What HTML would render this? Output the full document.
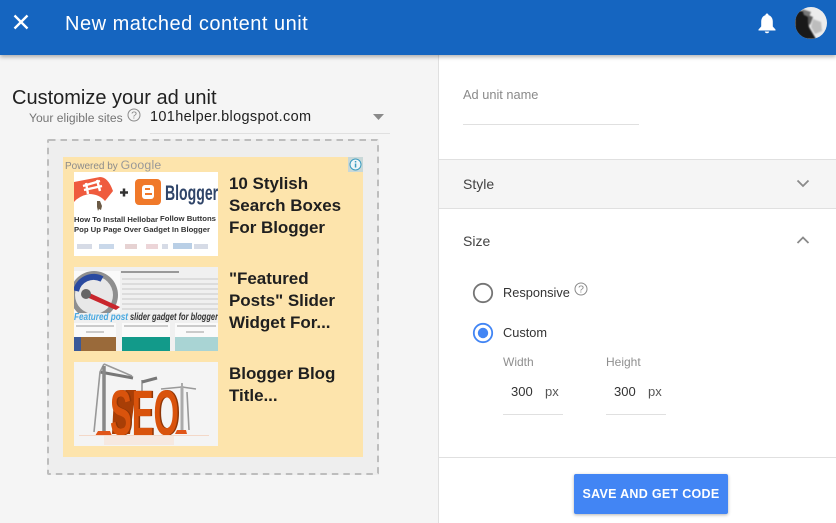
<!DOCTYPE html>
<html><head><meta charset="utf-8"><style>
html,body{margin:0;padding:0}
body{width:836px;height:523px;position:relative;overflow:hidden;background:#fff;font-family:"Liberation Sans",sans-serif;color:#212121}
.a{position:absolute;white-space:nowrap}
.ln{position:absolute;background:#e0e0e0}
.t{position:absolute;left:229px;font-weight:bold;font-size:17px;line-height:22px;letter-spacing:-.03px;color:#1f1f1f;white-space:nowrap}
.g{color:#757575}
.th{filter:blur(.35px)}
</style></head><body>
<div class="a" style="left:0;top:55px;width:438px;height:468px;background:#f5f5f5"></div>
<div class="ln" style="left:438px;top:55px;width:1px;height:468px"></div>
<div class="a" style="left:0;top:0;width:836px;height:55px;background:#1565c0;box-shadow:0 2px 4px rgba(0,0,0,.3)"></div>
<svg class="a" style="left:12px;top:13px" width="18" height="18" viewBox="0 0 18 18"><path d="M2.500 2.500L15.500 15.500M15.500 2.500L2.500 15.500" stroke="#fff" stroke-width="2.300" fill="none"/></svg>
<div class="a" style="left:65px;top:12px;font-size:20px;line-height:24px;color:#fff;letter-spacing:.5px">New matched content unit</div>
<svg class="a" style="left:757px;top:13px" width="20" height="22" viewBox="0 0 20 22"><path d="M10 .5C9 .5 8.500 1.200 8.500 2.100C5.700 2.900 4.200 5.500 4.200 8.500V13.500L1.500 16.500V17.500H18.500V16.500L15.800 13.500V8.500C15.800 5.500 14.300 2.900 11.500 2.100C11.500 1.200 11 .5 10 .5ZM7.800 18.500C7.800 19.600 8.900 20.300 10 20.300S12.200 19.600 12.200 18.500Z" fill="#fff"/></svg>
<svg class="a" style="left:795px;top:7px" width="32" height="32" viewBox="0 0 32 32"><defs><clipPath id="c"><circle cx="16" cy="16" r="16"/></clipPath></defs><g clip-path="url(#c)"><rect width="32" height="32" fill="#ececec"/><g style="filter:blur(.8px)"><path d="M0 4H8L13 10L14 20L21 32H0Z" fill="#191919"/><path d="M7 2L16 5L14 10L9 8Z" fill="#777"/><path d="M18 12L26 15L27 24L20 27L16 20Z" fill="#bdbdbd"/><path d="M13 8L18 10L15 18L13 16Z" fill="#5a5a5a"/></g></g></svg>

<div class="a" style="left:12px;top:86px;font-size:20px;line-height:24px;color:#212121">Customize your ad unit</div>
<div class="a g" style="left:29px;top:110px;font-size:12.100px;line-height:16px">Your eligible sites</div>
<svg class="a" style="left:127px;top:108px" width="14" height="14" viewBox="0 0 14 14"><circle cx="7" cy="7" r="6" fill="none" stroke="#8a8a8a"/><text x="7" y="10.700" font-size="10.500" text-anchor="middle" fill="#8a8a8a" font-family="Liberation Sans">?</text></svg>
<div class="a" style="left:150px;top:108px;font-size:14.500px;line-height:18px;color:#212121;letter-spacing:.34px">101helper.blogspot.com</div>
<svg class="a" style="left:373px;top:114px" width="11" height="6"><path d="M0 0H11L5.500 6Z" fill="#8a8a8a"/></svg>
<div class="ln" style="left:150px;top:133px;width:240px;height:1px"></div>

<div class="a" style="left:47px;top:139px;width:332px;height:336px;background:#eeeeee"></div>
<svg class="a" style="left:47px;top:139px" width="332" height="336"><rect x="1" y="1" width="330" height="334" rx="1" fill="none" stroke="#bdbdbd" stroke-width="2" stroke-dasharray="6.500 5"/></svg>
<div class="a" style="left:63px;top:157px;width:300px;height:300px;background:#fde4ac"></div>
<div class="a" style="left:348px;top:157px;width:15px;height:15px;background:#c8d8d8"></div>
<svg class="a" style="left:349px;top:158px" width="13" height="13" viewBox="0 0 13 13"><circle cx="6.500" cy="6.500" r="5.500" fill="#eef6f8" stroke="#3a9cc0"/><rect x="5.800" y="5.500" width="1.500" height="4" fill="#3a9cc0"/><rect x="5.800" y="3" width="1.500" height="1.500" fill="#3a9cc0"/></svg>
<div class="a" style="left:65px;top:159px;font-size:10px;line-height:12px;color:#8b8b8b">Powered by <span style="font-size:12.300px;letter-spacing:.2px;color:#999">Google</span></div>

<!-- thumb 1 -->
<svg class="a th" style="left:74px;top:172px" width="144" height="84" viewBox="0 0 144 84">
<rect width="144" height="84" fill="#fff"/>
<path d="M0 10L26 5Q34 5 39 19L31 29Q25 22 15 22Q5 24 0 30Z" fill="#ef5b3e"/>
<path d="M9 14L26 9M12 11L14 22M23 8L26 19M10 18L28 14" stroke="#fff" stroke-width="2.400" fill="none"/>
<path d="M23 29h3l2 5-1 4-2-1-1 2-1-4z" fill="#6b5a45"/>
<path d="M46 20.500H54M50 16.500V24.500" stroke="#333" stroke-width="2.500"/>
<rect x="61" y="7" width="26" height="26" rx="4" fill="#f0792a"/>
<rect x="68" y="13" width="12" height="14" rx="3" fill="#fff"/><rect x="71" y="16" width="5" height="2" fill="#f0792a"/><rect x="71" y="21" width="7" height="2" fill="#f0792a"/>
<text transform="translate(91,28) scale(.67,1)" font-family="Liberation Sans" font-weight="bold" font-size="21" fill="#2f4468">Blogger</text>
<text x="0" y="50" font-family="Liberation Sans" font-weight="bold" font-size="7.500" fill="#333" textLength="84" lengthAdjust="spacingAndGlyphs">How To Install Hellobar</text>
<text x="86" y="49" font-family="Liberation Sans" font-weight="bold" font-size="7.500" fill="#333" textLength="56" lengthAdjust="spacingAndGlyphs">Follow Buttons</text>
<text x="0" y="60" font-family="Liberation Sans" font-weight="bold" font-size="7.500" fill="#333" textLength="136" lengthAdjust="spacingAndGlyphs">Pop Up Page Over Gadget In Blogger</text>
<g fill="#d6dbe6"><rect x="3" y="72" width="15" height="5"/><rect x="25" y="72" width="15" height="5" fill="#c9d8ea"/><rect x="51" y="72" width="12" height="5" fill="#e6d2d2"/><rect x="72" y="72" width="12" height="5" fill="#ecd5d8"/><rect x="88" y="72" width="6" height="5"/><rect x="99" y="71" width="19" height="6" fill="#b9cfe6"/><rect x="120" y="72" width="14" height="5"/></g>
</svg>
<div class="t" style="top:173px">10 Stylish<br>Search Boxes<br>For Blogger</div>

<!-- thumb 2 -->
<svg class="a th" style="left:74px;top:267px" width="144" height="84" viewBox="0 0 144 84">
<rect width="144" height="84" fill="#f0f0f0"/>
<rect y="4" width="46" height="42" fill="#fafafa"/>
<clipPath id="g2"><rect y="4" width="46" height="42"/></clipPath>
<g clip-path="url(#g2)">
<circle cx="20" cy="28" r="24" fill="#8f8f8f"/><circle cx="20" cy="28" r="19" fill="#e8e8e8"/>
<path d="M2 24A18 18 0 0 1 28 12" stroke="#2a4aa0" stroke-width="6" fill="none"/>
<path d="M9 23L46 40L42 43L8 28Z" fill="#c9262c"/>
<circle cx="12" cy="27" r="5" fill="#666"/>
</g>
<path d="M47 5H105" stroke="#999" stroke-width="2"/>
<g stroke="#dcdcdc" stroke-width="2"><path d="M48 12H144M48 17H144M48 22H144M48 27H144M48 32H144M48 37H144M48 42H144"/></g>
<text x="0" y="53" font-family="Liberation Sans" font-style="italic" font-weight="bold" font-size="10" fill="#48a8e0" textLength="54" lengthAdjust="spacingAndGlyphs">Featured post</text>
<text x="56" y="53" font-family="Liberation Sans" font-style="italic" font-weight="bold" font-size="10" fill="#333" textLength="88" lengthAdjust="spacingAndGlyphs">slider gadget for blogger</text>
<rect y="56" width="42" height="28" fill="#fafafa"/><rect x="48" y="56" width="48" height="28" fill="#fafafa"/><rect x="101" y="56" width="43" height="28" fill="#fafafa"/>
<path d="M2 59H40M12 65H30M50 59H94M103 59H142M112 65H130" stroke="#bbb" stroke-width="1.500"/>
<rect y="70" width="42" height="14" fill="#9a6a3a"/><rect y="70" width="7" height="14" fill="#3b5998"/>
<rect x="48" y="70" width="48" height="14" fill="#129a8a"/>
<rect x="101" y="70" width="43" height="14" fill="#a9d4d4"/>
</svg>
<div class="t" style="top:268px">"Featured<br>Posts" Slider<br>Widget For...</div>

<!-- thumb 3 -->
<svg class="a th" style="left:74px;top:362px" width="144" height="84" viewBox="0 0 144 84">
<rect width="144" height="84" fill="#f4f4f4"/>
<path d="M26 10L59 16" stroke="#777" stroke-width="3" fill="none"/>
<path d="M20 70L26 10L30 2M30 2L58 14M68 18V33M68 20L83 16M87 27L108 25M108 25L122 27M108 21V71M115 68L113 30" stroke="#999" stroke-width="1.600" fill="none"/>
<path d="M30 4V70" stroke="#888" stroke-width="3.500"/>
<path d="M108 24V70" stroke="#aaa" stroke-width="3"/>
<path d="M68 20L83 16" stroke="#777" stroke-width="3"/>
<path d="M21 74H38L36 69H24Z M101 72H113L112 68H103Z" fill="#e0561a"/>
<path d="M40 34L52 28H62L56 72H38Z" fill="#a83e06"/>
<text transform="translate(37.500,73) scale(.51,1)" font-family="Liberation Sans" font-weight="bold" font-size="64" fill="#8f3606">SEO</text>
<text transform="translate(36,73) scale(.51,1)" font-family="Liberation Sans" font-weight="bold" font-size="64" fill="#d9530c">SEO</text>
<rect x="5" y="73" width="130" height="1" fill="#f3d8c8"/>
<rect x="30" y="74" width="70" height="9" fill="#f7e4d8" opacity=".7"/>
</svg>
<div class="t" style="top:363px">Blogger Blog<br>Title...</div>

<!-- right -->
<div class="a g" style="left:463px;top:87px;font-size:12.800px;line-height:16px;color:#8a8a8a">Ad unit name</div>
<div class="ln" style="left:463px;top:124px;width:176px;height:1px"></div>
<div class="a" style="left:439px;top:159px;width:397px;height:48px;background:#f5f5f5;border-top:1px solid #e0e0e0;border-bottom:1px solid #e0e0e0"></div>
<div class="a" style="left:463px;top:176px;font-size:14px;line-height:17px;color:#424242">Style</div>
<svg class="a" style="left:796px;top:179px" width="14" height="10"><path d="M1.500 1.500L7 7L12.500 1.500" fill="none" stroke="#8a8a8a" stroke-width="1.800"/></svg>
<div class="a" style="left:463px;top:233px;font-size:14px;line-height:17px;color:#424242">Size</div>
<svg class="a" style="left:796px;top:235px" width="14" height="10"><path d="M1.500 8L7 2.500L12.500 8" fill="none" stroke="#8a8a8a" stroke-width="1.800"/></svg>

<svg class="a" style="left:472px;top:282px" width="22" height="22"><circle cx="11" cy="11" r="9.200" fill="#fff" stroke="#757575" stroke-width="1.800"/></svg>
<div class="a" style="left:503px;top:285px;font-size:12.800px;line-height:16px;color:#333">Responsive</div>
<svg class="a" style="left:574px;top:282px" width="14" height="14" viewBox="0 0 14 14"><circle cx="7" cy="7" r="6" fill="none" stroke="#8a8a8a"/><text x="7" y="10.700" font-size="10.500" text-anchor="middle" fill="#8a8a8a" font-family="Liberation Sans">?</text></svg>
<svg class="a" style="left:472px;top:322px" width="22" height="22"><circle cx="11" cy="11" r="9.200" fill="#fff" stroke="#4285f4" stroke-width="1.800"/><circle cx="11" cy="11" r="5.200" fill="#4285f4"/></svg>
<div class="a" style="left:503px;top:325px;font-size:12.800px;line-height:16px;color:#333">Custom</div>
<div class="a" style="left:503px;top:355px;font-size:12px;line-height:15px;color:#8f8f8f">Width</div>
<div class="a" style="left:606px;top:355px;font-size:12px;line-height:15px;color:#8f8f8f">Height</div>
<div class="a" style="left:511px;top:384px;font-size:13px;line-height:16px;color:#333">300</div>
<div class="a" style="left:545px;top:384px;font-size:13px;line-height:16px;color:#555">px</div>
<div class="a" style="left:614px;top:384px;font-size:13px;line-height:16px;color:#333">300</div>
<div class="a" style="left:648px;top:384px;font-size:13px;line-height:16px;color:#555">px</div>
<div class="ln" style="left:503px;top:414px;width:60px;height:1px"></div>
<div class="ln" style="left:606px;top:414px;width:60px;height:1px"></div>
<div class="ln" style="left:439px;top:457px;width:397px;height:1px"></div>
<div class="a" style="left:574px;top:474px;width:154px;height:40px;background:#4285f4;border-radius:2px;box-shadow:0 1px 3px rgba(0,0,0,.3);color:#fff;font-weight:bold;font-size:12.500px;line-height:40px;text-align:center;letter-spacing:.3px">SAVE AND GET CODE</div>
</body></html>
